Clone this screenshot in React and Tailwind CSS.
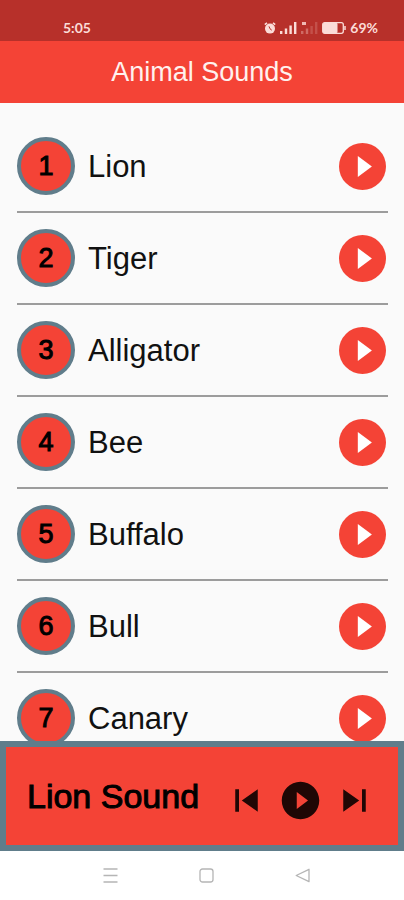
import React from "react";

const animals = ["Lion", "Tiger", "Alligator", "Bee", "Buffalo", "Bull", "Canary"];

function StatusBar() {
  return (
    <div className="flex h-[41px] shrink-0 items-end justify-between bg-[#b7302a] pr-[26px] pb-[3px] pl-[63px] font-['Lato',sans-serif] text-sm font-bold text-[#fbdcd8]">
      <span>5:05</span>
      <div className="flex items-center gap-1">
        <svg className="h-3 w-3" viewBox="0 0 12 12" fill="none" aria-hidden="true">
          <circle cx="6" cy="6.6" r="5" fill="#fbdcd8" />
          <path d="M.8 2.6 3 .8M11.2 2.6 9 .8" stroke="#fbdcd8" strokeWidth="1.6" />
          <path d="M5 4.4 6 6.8l1.8 1.4" stroke="#b7302a" strokeWidth="1" />
        </svg>
        <svg className="h-3 w-[17px]" viewBox="0 0 17 12" fill="#fbdcd8" aria-hidden="true">
          <path d="M0 9h2.4v3H0zM4.8 6.5h2.4V12H4.8zM9.4 3.5h2.4V12H9.4zM14 0h2.4v12H14z" />
        </svg>
        <svg className="h-3 w-[17px]" viewBox="0 0 17 12" fill="#cf6b65" aria-hidden="true">
          <path d="M0 9h2.4v3H0zM4.8 6.5h2.4V12H4.8z" />
          <path d="M9.4 4h2.4v8H9.4zM14 0h2.4v12H14z" opacity=".55" />
          <path d="M1 0h4v3H1z" fill="#f0b9b4" />
        </svg>
        <svg className="h-3 w-6" viewBox="0 0 24 12" fill="none" aria-hidden="true">
          <rect x=".7" y=".7" width="20.6" height="10.6" rx="2" stroke="#fbdcd8" strokeWidth="1.3" />
          <rect x="1" y="1" width="14.5" height="10" rx="1" fill="#fbdcd8" />
          <path d="M23 4v4" stroke="#fbdcd8" strokeWidth="1.5" />
        </svg>
        <span>69%</span>
      </div>
    </div>
  );
}

function AnimalRow({ number, name }) {
  return (
    <li className="flex h-[92px] items-center border-b-2 border-[#9c9c9c] pr-[2px]">
      <span className="flex h-[58px] w-[58px] shrink-0 items-center justify-center rounded-full border-4 border-[#607d8b] bg-[#f44336] text-[27px] leading-none text-black [-webkit-text-stroke:1px_black]">
        {number}
      </span>
      <span className="flex-1 pt-[2px] pl-[13px] text-[31px] leading-9 text-[#111111]">{name}</span>
      <button type="button" aria-label={`Play ${name}`} className="shrink-0">
        <svg className="h-[47px] w-[47px]" viewBox="2 2 20 20" aria-hidden="true">
          <circle cx="12" cy="12" r="10" fill="#f44336" />
          <path d="M10 16.5l6-4.5-6-4.5z" fill="#ffffff" />
        </svg>
      </button>
    </li>
  );
}

function PlayerBar() {
  return (
    <section className="flex h-[110px] shrink-0 items-center justify-between border-6 border-[#607d8b] bg-[#f44336] pr-[21px] pl-[21px] text-black">
      <h2 className="text-[34px] leading-10 whitespace-nowrap [-webkit-text-stroke:1px_black]">Lion Sound</h2>
      <div className="flex items-center gap-[9px] pt-2 text-[#1f0705]">
        <button type="button" aria-label="Previous">
          <svg className="h-[45px] w-[45px]" viewBox="0 0 24 24" fill="currentColor" aria-hidden="true">
            <path d="M6 6h2v12H6zm3.5 6l8.5 6V6z" />
          </svg>
        </button>
        <button type="button" aria-label="Play">
          <svg className="h-[45px] w-[45px]" viewBox="0 0 24 24" fill="currentColor" aria-hidden="true">
            <path d="M12 2C6.48 2 2 6.48 2 12s4.48 10 10 10 10-4.48 10-10S17.52 2 12 2zm-2 14.5v-9l6 4.5-6 4.5z" />
          </svg>
        </button>
        <button type="button" aria-label="Next">
          <svg className="h-[45px] w-[45px]" viewBox="0 0 24 24" fill="currentColor" aria-hidden="true">
            <path d="M6 18l8.5-6L6 6v12zM16 6v12h2V6h-2z" />
          </svg>
        </button>
      </div>
    </section>
  );
}

function SystemNav() {
  return (
    <nav className="flex h-[49px] shrink-0 items-center justify-center gap-[81px] bg-white pl-2 text-[#b5b5b5]">
      <button type="button" aria-label="Recent apps">
        <svg className="h-[15px] w-[15px]" viewBox="0 0 15 15" fill="none" stroke="currentColor" strokeWidth="1.3" aria-hidden="true">
          <path d="M.5 1h14M.5 7.5h14M.5 14h14" />
        </svg>
      </button>
      <button type="button" aria-label="Home">
        <svg className="h-[15px] w-[15px]" viewBox="0 0 15 15" fill="none" stroke="currentColor" strokeWidth="1.3" aria-hidden="true">
          <rect x="1" y="1" width="13" height="13" rx="2.5" />
        </svg>
      </button>
      <button type="button" aria-label="Back">
        <svg className="h-[15px] w-[15px]" viewBox="0 0 15 15" fill="none" stroke="currentColor" strokeWidth="1.3" strokeLinejoin="round" aria-hidden="true">
          <path d="M14 1.3v12.4L1.2 7.5z" />
        </svg>
      </button>
    </nav>
  );
}

export default function App() {
  return (
    <div className="flex h-screen flex-col bg-[#fafafa] font-['Liberation_Sans',Arial,sans-serif]">
      <StatusBar />
      <header className="flex h-[62px] shrink-0 items-center justify-center bg-[#f44336]">
        <h1 className="text-[27px] leading-8 text-[#fff1ee]">Animal Sounds</h1>
      </header>
      <main className="min-h-0 flex-1 overflow-y-auto pt-[18px] pr-4 pl-[17px] [scrollbar-width:none]">
        <ul>
          {animals.map((name, index) => (
            <AnimalRow key={name} number={index + 1} name={name} />
          ))}
        </ul>
      </main>
      <PlayerBar />
      <SystemNav />
    </div>
  );
}
